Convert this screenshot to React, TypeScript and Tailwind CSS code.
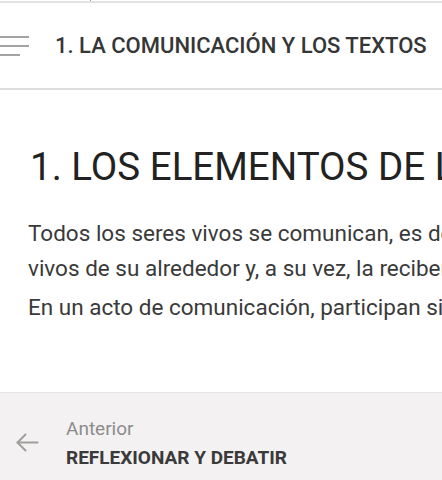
function MenuIcon() {
  return (
    <div className="flex flex-col gap-[7px] w-[29px]">
      <span className="block h-[2px] w-[29px] bg-[#a3a3a3]" />
      <span className="block h-[2px] w-[29px] bg-[#a3a3a3]" />
      <span className="block h-[2px] w-[20px] bg-[#a3a3a3]" />
    </div>
  )
}

function BackArrow() {
  return (
    <svg width="23" height="19" viewBox="0 0 23 19" fill="none" stroke="#a29e9e" strokeWidth="2" strokeLinecap="round" strokeLinejoin="round">
      <path d="M21.5 9.5H1.5" />
      <path d="M9.5 1.5L1.5 9.5L9.5 17.5" />
    </svg>
  )
}

export default function App() {
  return (
    <div className="w-[442px] h-[480px] overflow-hidden bg-white flex flex-col font-['Roboto',sans-serif]">
      <div className="h-[3px] shrink-0 flex border-b-2 border-[#e2e2e2]">
        <span className="ml-[90px] w-px h-full bg-[#9a9a9a]" />
      </div>

      <header className="h-[87px] shrink-0 flex items-center border-b-2 border-[#dedede]">
        <MenuIcon />
        <h1 className="ml-[26px] text-[22px] font-medium text-[#363636] whitespace-nowrap">
          1. LA COMUNICACIÓN Y LOS TEXTOS
        </h1>
      </header>

      <main className="flex-1 overflow-hidden pl-[30px]">
        <h2 className="mt-[54px] text-[38.5px] leading-[46px] text-[#222] whitespace-nowrap">
          1. LOS ELEMENTOS DE LA COMUNICACIÓN
        </h2>
        <p className="mt-[26px] -ml-[2px] text-[22.5px] leading-[35px] text-[#3a3a3a] whitespace-nowrap">
          Todos los seres vivos se comunican, es decir, transmiten información a otros seres
          <br />
          vivos de su alrededor y, a su vez, la reciben de ellos.
        </p>
        <p className="mt-[4px] -ml-[2px] text-[22.5px] leading-[35px] text-[#3a3a3a] whitespace-nowrap">
          En un acto de comunicación, participan siete elementos:
        </p>
      </main>

      <footer className="h-[88px] shrink-0 flex items-center bg-[#f3f1f1] border-t border-[#e4e2e2]">
        <div className="ml-[16px] mt-[11px]">
          <BackArrow />
        </div>
        <div className="ml-[27px] flex flex-col mt-[12px]">
          <span className="text-[19px] leading-[29px] text-[#8c8c8c]">Anterior</span>
          <span className="text-[19px] leading-[29px] font-bold text-[#3a3a3a]">
            REFLEXIONAR Y DEBATIR
          </span>
        </div>
      </footer>
    </div>
  )
}
